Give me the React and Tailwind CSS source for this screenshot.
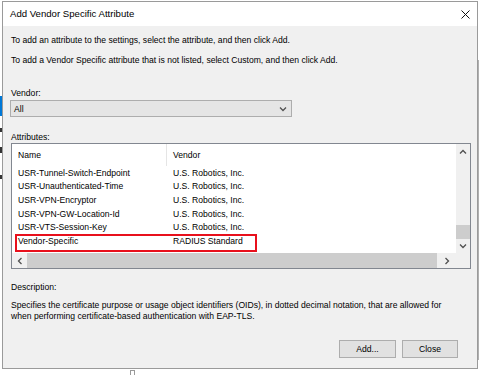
import React from 'react';

const rows = [
  ['USR-Tunnel-Switch-Endpoint', 'U.S. Robotics, Inc.'],
  ['USR-Unauthenticated-Time', 'U.S. Robotics, Inc.'],
  ['USR-VPN-Encryptor', 'U.S. Robotics, Inc.'],
  ['USR-VPN-GW-Location-Id', 'U.S. Robotics, Inc.'],
  ['USR-VTS-Session-Key', 'U.S. Robotics, Inc.'],
  ['Vendor-Specific', 'RADIUS Standard'],
];

function Arrow({ d }) {
  return (
    <svg width="8" height="8" viewBox="0 0 8 8" fill="none">
      <path d={d} stroke="#505050" strokeWidth="1.3" />
    </svg>
  );
}

const up = 'M1 5.5 L4 2.5 L7 5.5';
const down = 'M1 2.5 L4 5.5 L7 2.5';
const left = 'M5.5 1 L2.5 4 L5.5 7';
const right = 'M2.5 1 L5.5 4 L2.5 7';

export default function App() {
  return (
    <div className="relative w-[480px] h-[375px] overflow-hidden bg-white font-['Liberation_Sans',Arial,sans-serif] text-[8.6px] text-black">
      {/* bits of the window behind */}
      <div className="absolute left-0 top-[96px] w-[2px] h-[20px] bg-[#0078d7]" />
      <div className="absolute left-0 top-[128px] w-[2px] h-[4px] bg-[#333]" />
      <div className="absolute left-0 top-[147px] w-[2px] h-[6px] bg-[#333]" />
      <div className="absolute left-0 top-[175px] w-[2px] h-[4px] bg-[#333]" />
      <div className="absolute left-[478px] top-[60px] w-[1px] h-[300px] bg-[#b0b0b0]" />

      <div className="ml-[2px] mt-[1px] w-[476px] h-[368px] border border-[#9a9a9a] bg-[#f0f0f0] flex flex-col">
        {/* title bar */}
        <div className="h-[24px] bg-white flex items-center justify-between pl-[7px] pr-[7px] shrink-0">
          <span className="text-[9.6px]">Add Vendor Specific Attribute</span>
          <svg width="9" height="9" viewBox="0 0 9 9">
            <path d="M0.5 0.5 L8.5 8.5 M8.5 0.5 L0.5 8.5" stroke="#111" strokeWidth="1" />
          </svg>
        </div>

        <div className="flex flex-col pl-[8px] pr-[6px] pt-[8px] leading-[12px]">
          <div>To add an attribute to the settings, select the attribute, and then click Add.</div>
          <div className="mt-[8px]">To add a Vendor Specific attribute that is not listed, select Custom, and then click Add.</div>

          <div className="mt-[21px]">Vendor:</div>
          <div className="mt-[1px] -ml-[1px] w-[282px] h-[17px] border border-[#adadad] bg-[#e5e5e5] flex items-center justify-between pl-[3px] pr-[4px]">
            <span>All</span>
            <Arrow d={down} />
          </div>

          <div className="mt-[14px]">Attributes:</div>
          <div className="relative w-[460px] h-[126px] border border-[#828790] bg-white flex">
            <div className="flex-1 flex flex-col">
              <div className="flex-1 flex flex-col">
                <div className="h-[22px] flex items-center shrink-0">
                  <div className="w-[155px] h-full pl-[6px] flex items-center border-r border-[#e5e5e5]">Name</div>
                  <div className="pl-[6px]">Vendor</div>
                </div>
                {rows.map(([n, v]) => (
                  <div key={n} className="h-[13.6px] flex items-center shrink-0">
                    <div className="w-[155px] pl-[6px]">{n}</div>
                    <div className="pl-[6px]">{v}</div>
                  </div>
                ))}
              </div>
              {/* horizontal scrollbar */}
              <div className="h-[15px] bg-[#f0f0f0] flex items-center shrink-0">
                <div className="w-[15px] flex justify-center"><Arrow d={left} /></div>
                <div className="w-[410px] h-[15px] bg-[#cdcdcd]" />
                <div className="flex-1 flex justify-center"><Arrow d={right} /></div>
              </div>
            </div>
            {/* vertical scrollbar */}
            <div className="w-[14px] bg-[#f0f0f0] flex flex-col items-center">
              <div className="h-[16px] flex items-center"><Arrow d={up} /></div>
              <div className="flex-1" />
              <div className="w-full h-[14px] bg-[#cdcdcd]" />
              <div className="h-[14px] flex items-center"><Arrow d={down} /></div>
              <div className="h-[15px]" />
            </div>
            {/* annotation */}
            <div className="absolute left-[3px] top-[90px] w-[242px] h-[18px] border-2 border-[#e8101c]" />
          </div>

          <div className="mt-[12px]">Description:</div>
          <div className="mt-[7px] leading-[11px]">
            Specifies the certificate purpose or usage object identifiers (OIDs), in dotted decimal notation, that are allowed for
            <br />
            when performing certificate-based authentication with EAP-TLS.
          </div>

          <div className="mt-[18px] flex justify-end gap-[6px] mr-[13px]">
            <div className="w-[57px] h-[18px] border border-[#adadad] bg-[#e1e1e1] flex items-center justify-center">Add...</div>
            <div className="w-[56px] h-[18px] border border-[#adadad] bg-[#e1e1e1] flex items-center justify-center">Close</div>
          </div>
        </div>
      </div>

      <div className="ml-[130px] mt-[1px] w-[5px] h-[8px] border border-[#9a9a9a] bg-white" />
    </div>
  );
}
